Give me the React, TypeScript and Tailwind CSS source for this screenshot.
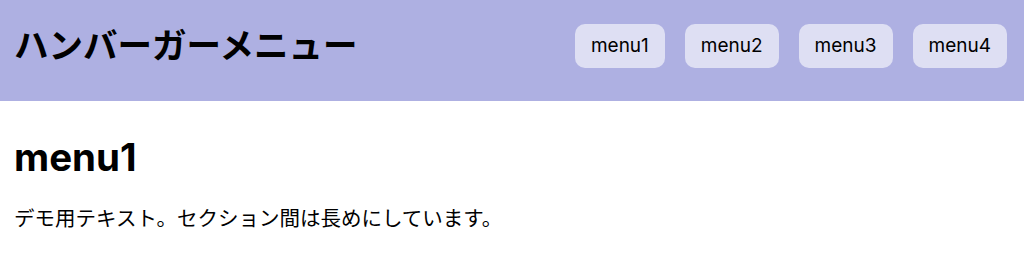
import React from 'react';

const menus = ['menu1', 'menu2', 'menu3', 'menu4'];

export default function App() {
  return (
    <div className="min-h-screen bg-white text-black" style={{ fontFamily: 'Inter, "Noto Sans CJK JP", sans-serif' }}>
      <header className="h-[101px] bg-[#aeb0e2] flex items-start justify-between pl-[14px] pr-[17px]">
        <h1 className="mt-[24px] text-[34.5px] leading-[44px] font-bold">ハンバーガーメニュー</h1>
        <nav className="mt-[24px] flex gap-5">
          {menus.map((m) => (
            <a key={m} href="#" className="h-[44px] px-[16px] flex items-center rounded-[10px] bg-[#dedff3] text-[19px]">
              {m}
            </a>
          ))}
        </nav>
      </header>
      <main className="px-[14px] pt-[32px]">
        <h2 className="text-[38.5px] font-bold leading-tight">menu1</h2>
        <p className="mt-[23px] text-[20.5px]">デモ用テキスト。セクション間は長めにしています。</p>
      </main>
    </div>
  );
}
